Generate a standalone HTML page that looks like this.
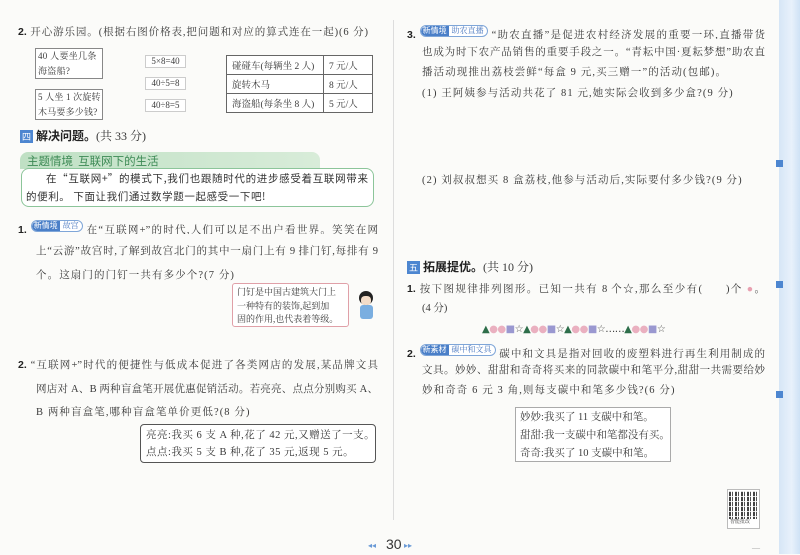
<!DOCTYPE html>
<html><head><meta charset="utf-8"><style>
*{margin:0;padding:0;box-sizing:border-box}
body{width:800px;height:554px;overflow:hidden;background:#fbfbf9;font-family:"Liberation Serif","Noto Serif CJK SC",serif;color:#3a3a3a;font-size:10.5px;position:relative}
.a{position:absolute;white-space:nowrap;line-height:14px}
.s{letter-spacing:1.1px}
.j{position:absolute;text-align:justify;text-align-last:justify;line-height:14px;height:14px;overflow:hidden}
.b{font-family:"Liberation Sans","Noto Sans CJK SC",sans-serif;font-weight:bold;color:#222;letter-spacing:0}
.box{position:absolute;border:1px solid #888;background:#fff;white-space:nowrap}
.tag{display:inline-block;border:1px solid #7fa6d8;border-radius:7px;height:12px;line-height:10px;font-size:8px;vertical-align:1px;overflow:hidden;background:#fff;color:#4a78c0}
.tag i{font-style:normal;background:#4a7fc8;color:#fff;padding:0 2px;display:inline-block;height:12px;border-radius:6px 0 0 6px;font-family:"Noto Sans CJK SC",sans-serif}
.tag span{padding:0 3px}
.sec{display:inline-block;width:13px;height:13px;background:#4d86d0;color:#fff;font-size:9px;text-align:center;line-height:13px;font-family:"Noto Sans CJK SC",sans-serif;vertical-align:0px;margin-right:3px}
table{border-collapse:collapse;font-size:9.5px}
td{border:1px solid #666;height:19px;padding:0 5px;white-space:nowrap}
</style></head><body>
<div style="position:absolute;left:393px;top:20px;width:1px;height:500px;background:#ddd"></div>
<div style="position:absolute;left:779px;top:0;width:21px;height:554px;background:linear-gradient(90deg,#d6e6f6,#e8f1fb 60%,#cfe2f5)"></div>
<div style="position:absolute;left:776px;top:160px;width:7px;height:7px;background:#4d86d0"></div>
<div style="position:absolute;left:776px;top:281px;width:7px;height:7px;background:#4d86d0"></div>
<div style="position:absolute;left:776px;top:391px;width:7px;height:7px;background:#4d86d0"></div>

<div class="a" style="left:18px;top:25px;letter-spacing:.9px"><b class="b">2.</b> 开心游乐园。(根据右图价格表,把问题和对应的算式连在一起)(6 分)</div>
<div class="box" style="left:35px;top:48px;width:68px;height:31px;font-size:9px;line-height:15px;padding-left:2px;letter-spacing:.3px">40 人要坐几条<br>海盗船?</div>
<div class="box" style="left:35px;top:89px;width:68px;height:31px;font-size:9px;line-height:15px;padding-left:2px;letter-spacing:.2px">5 人坐 1 次旋转<br>木马要多少钱?</div>
<div class="box" style="left:145px;top:55px;width:41px;height:13px;font-size:9px;line-height:11px;text-align:center;border-color:#ccc">5×8=40</div>
<div class="box" style="left:145px;top:77px;width:41px;height:13px;font-size:9px;line-height:11px;text-align:center;border-color:#ccc">40÷5=8</div>
<div class="box" style="left:145px;top:99px;width:41px;height:13px;font-size:9px;line-height:11px;text-align:center;border-color:#ccc">40÷8=5</div>
<table style="position:absolute;left:226px;top:55px;width:147px;background:#fff">
<tr><td style="width:97px">碰碰车(每辆坐 2 人)</td><td>7 元/人</td></tr>
<tr><td>旋转木马</td><td>8 元/人</td></tr>
<tr><td>海盗船(每条坐 8 人)</td><td>5 元/人</td></tr>
</table>
<div class="a" style="left:20px;top:129px;font-size:12px"><span class="sec">四</span><b class="b" style="font-size:12px">解决问题。</b>(共 33 分)</div>

<div style="position:absolute;left:20px;top:152px;width:300px;height:17px;background:linear-gradient(90deg,#bfe0c4,#d8ecd9);border-radius:8px 8px 0 0"></div>
<div class="a" style="left:27px;top:154px;font-family:'Noto Sans CJK SC',sans-serif;font-size:11.5px;color:#3d8a55">主题情境&nbsp;&nbsp;互联网下的生活</div>
<div style="position:absolute;left:21px;top:168px;width:353px;height:39px;border:1.5px solid #8cc59a;border-radius:8px;background:#fff"></div>
<div class="j" style="left:46px;top:172px;width:322px;font-family:'Noto Sans CJK SC',sans-serif;color:#333">在“互联网+”的模式下,我们也跟随时代的进步感受着互联网带来</div>
<div class="a" style="left:26px;top:190px;font-family:'Noto Sans CJK SC',sans-serif;color:#333;letter-spacing:.6px">的便利。 下面让我们通过数学题一起感受一下吧!</div>

<div class="j" style="left:18px;top:220px;width:360px"><b class="b">1.</b> <span class="tag"><i>新情境</i><span>故宫</span></span> 在“互联网+”的时代,人们可以足不出户看世界。笑笑在网</div>
<div class="j" style="left:36px;top:245px;width:342px">上“云游”故宫时,了解到故宫北门的其中一扇门上有 9 排门钉,每排有 9</div>
<div class="a s" style="left:36px;top:269px">个。这扇门的门钉一共有多少个?(7 分)</div>

<div class="box" style="left:232px;top:283px;width:117px;height:44px;border-color:#e0a0a8;border-radius:3px;font-size:9px;line-height:13.5px;padding:2px 4px">门钉是中国古建筑大门上<br>一种特有的装饰,起到加<br>固的作用,也代表着等级。</div>
<div style="position:absolute;left:359px;top:291px;width:14px;height:14px;border-radius:50%;background:#222"></div>
<div style="position:absolute;left:361px;top:296px;width:10px;height:9px;border-radius:40%;background:#f3dcc8"></div>
<div style="position:absolute;left:360px;top:305px;width:13px;height:14px;border-radius:3px;background:#7aaee0"></div>

<div class="j" style="left:18px;top:358px;width:360px"><b class="b">2.</b> “互联网+”时代的便捷性与低成本促进了各类网店的发展,某品牌文具</div>
<div class="j" style="left:36px;top:383px;width:342px">网店对 A、B 两种盲盒笔开展优惠促销活动。若亮亮、点点分别购买 A、</div>
<div class="a s" style="left:36px;top:406px">B 两种盲盒笔,哪种盲盒笔单价更低?(8 分)</div>
<div class="box" style="left:140px;top:424px;width:236px;height:39px;border:1.5px solid #555;border-radius:4px;padding:2px 5px;line-height:17px;letter-spacing:.5px">亮亮:我买 6 支 A 种,花了 42 元,又赠送了一支。<br>点点:我买 5 支 B 种,花了 35 元,返现 5 元。</div>

<div class="a" style="left:368px;top:539px;font-size:8px;color:#6a9ad6">◂◂</div>
<div class="a" style="left:386px;top:537px;font-family:'Liberation Sans',sans-serif;font-size:14px;color:#333">30</div>
<div class="a" style="left:404px;top:539px;font-size:8px;color:#6a9ad6">▸▸</div>

<div class="j" style="left:407px;top:25px;width:358px"><b class="b">3.</b> <span class="tag"><i>新情境</i><span>助农直播</span></span> “助农直播”是促进农村经济发展的重要一环,直播带货</div>
<div class="j" style="left:422px;top:46px;width:343px">也成为时下农产品销售的重要手段之一。“青耘中国·夏耘梦想”助农直</div>
<div class="a s" style="left:422px;top:66px">播活动现推出荔枝尝鲜“每盒 9 元,买三赠一”的活动(包邮)。</div>
<div class="a s" style="left:422px;top:87px">(1) 王阿姨参与活动共花了 81 元,她实际会收到多少盒?(9 分)</div>
<div class="a s" style="left:422px;top:174px">(2) 刘叔叔想买 8 盒荔枝,他参与活动后,实际要付多少钱?(9 分)</div>
<div class="a" style="left:407px;top:260px;font-size:12px"><span class="sec">五</span><b class="b" style="font-size:12px">拓展提优。</b>(共 10 分)</div>
<div class="j" style="left:407px;top:282px;width:358px"><b class="b">1.</b> 按下图规律排列图形。已知一共有 8 个☆,那么至少有(&nbsp;&nbsp;&nbsp;&nbsp;&nbsp;&nbsp;)个 <span style="color:#e8a0b0">●</span>。</div>
<div class="a" style="left:422px;top:302px">(4 分)</div>
<div class="a" style="left:482px;top:323px;font-size:10px;letter-spacing:-0.5px;font-family:'DejaVu Sans',sans-serif"><span style="color:#2e6e4a">▲</span><span style="color:#eab0c0">●●</span><span style="color:#9a98d0">■</span><span style="color:#555">☆</span><span style="color:#2e6e4a">▲</span><span style="color:#eab0c0">●●</span><span style="color:#9a98d0">■</span><span style="color:#555">☆</span><span style="color:#2e6e4a">▲</span><span style="color:#eab0c0">●●</span><span style="color:#9a98d0">■</span><span style="color:#555">☆</span>……<span style="color:#2e6e4a">▲</span><span style="color:#eab0c0">●●</span><span style="color:#9a98d0">■</span><span style="color:#555">☆</span></div>
<div class="j" style="left:407px;top:344px;width:358px"><b class="b">2.</b> <span class="tag"><i>新素材</i><span>碳中和文具</span></span> 碳中和文具是指对回收的废塑料进行再生利用制成的</div>
<div class="j" style="left:422px;top:364px;width:343px">文具。妙妙、甜甜和奇奇将买来的同款碳中和笔平分,甜甜一共需要给妙</div>
<div class="a s" style="left:422px;top:384px">妙和奇奇 6 元 3 角,则每支碳中和笔多少钱?(6 分)</div>
<div class="box" style="left:515px;top:407px;width:156px;height:55px;border-color:#aaa;padding:1px 4px;line-height:18px">妙妙:我买了 11 支碳中和笔。<br>甜甜:我一支碳中和笔都没有买。<br>奇奇:我买了 10 支碳中和笔。</div>
<div style="position:absolute;left:727px;top:489px;width:33px;height:40px;border:1px solid #bbb;background:#fff"></div>
<div style="position:absolute;left:729px;top:491px;width:29px;height:28px;background:repeating-linear-gradient(90deg,#222 0 2px,#fff 2px 3px,#333 3px 4px,#fff 4px 6px),#222;opacity:.85"></div>
<div style="position:absolute;left:729px;top:491px;width:29px;height:28px;background:repeating-linear-gradient(0deg,transparent 0 2px,rgba(255,255,255,.8) 2px 3px,transparent 3px 5px)"></div>
<div class="a" style="left:730px;top:519px;font-size:5px;line-height:8px">智能批改</div>
<div class="a" style="left:752px;top:541px;color:#999;font-size:8px">—</div>
</body></html>
